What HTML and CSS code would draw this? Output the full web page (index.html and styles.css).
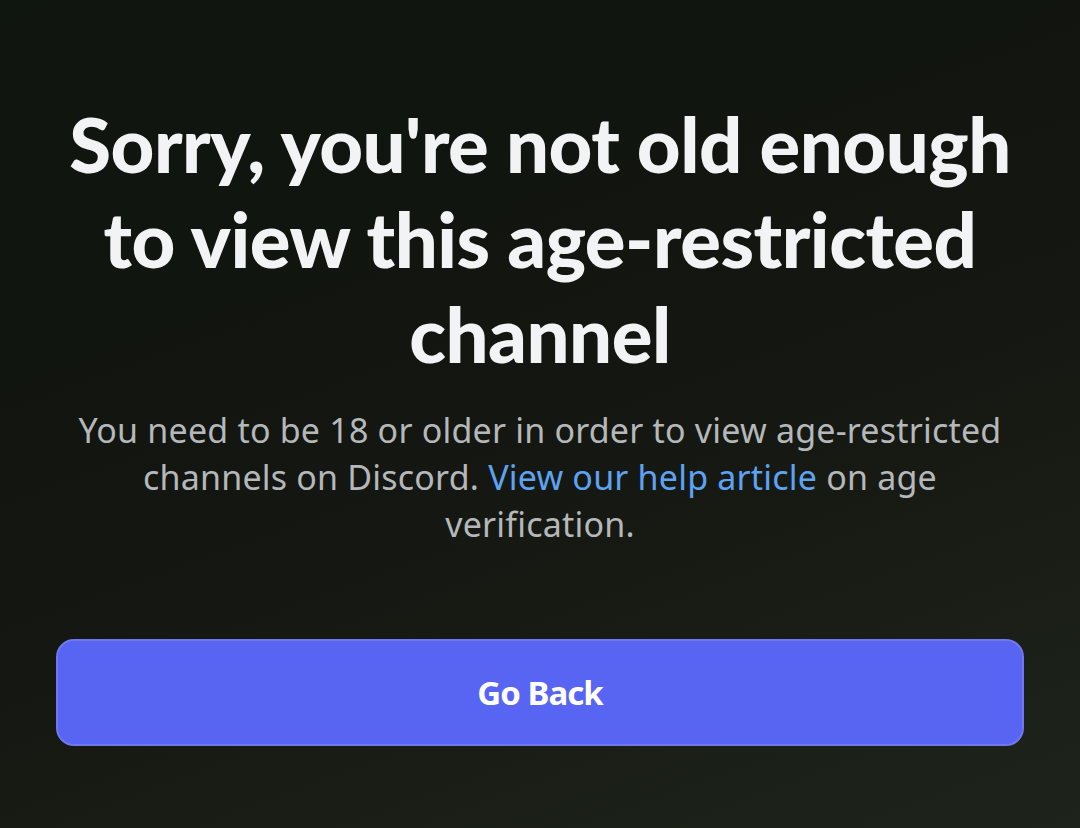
FILE: index.html
```html
<!DOCTYPE html>
<html>
<head>
<meta charset="utf-8">
<link rel="stylesheet" href="styles.css">
</head>
<body>
<main class="screen">
  <h1 class="title">Sorry, you're not old enough to view this age-restricted channel</h1>
  <p class="desc">You need to be 18 or older in order to view age-restricted channels on Discord. <a class="link" href="#">View our help article</a> on age verification.</p>
  <button class="btn">Go Back</button>
</main>
</body>
</html>
```
FILE: styles.css
```css
html, body {
  margin: 0;
  padding: 0;
  height: 100%;
}
body {
  background: linear-gradient(160deg, #0f150f 0%, #121510 40%, #171a13 65%, #1e241b 100%);
  font-family: "Noto Sans", "Open Sans", sans-serif;
  overflow: hidden;
}
.screen {
  width: 1080px;
  height: 828px;
  box-sizing: border-box;
  padding: 96px 56px 0;
  display: flex;
  flex-direction: column;
  align-items: center;
}
.title {
  margin: 0;
  color: #f2f3f5;
  font-family: Lato, "Noto Sans", sans-serif;
  font-size: 76px;
  line-height: 95px;
  font-weight: 900;
  text-align: center;
  letter-spacing: -0.5px;
  width: 968px;
}
.desc {
  margin: 26px 0 0;
  color: #b5b8bb;
  font-size: 34px;
  line-height: 47px;
  text-align: center;
  width: 950px;
  letter-spacing: 0.2px;
}
.link {
  color: #5ea3f3;
  text-decoration: none;
}
.btn {
  margin-top: 91px;
  width: 968px;
  height: 107px;
  box-sizing: border-box;
  border: 2px solid #7078ee;
  border-radius: 18px;
  background: #5865f2;
  color: #ffffff;
  font-family: "Noto Sans", sans-serif;
  font-size: 33px;
  font-weight: 700;
  letter-spacing: -1px;
}
```
